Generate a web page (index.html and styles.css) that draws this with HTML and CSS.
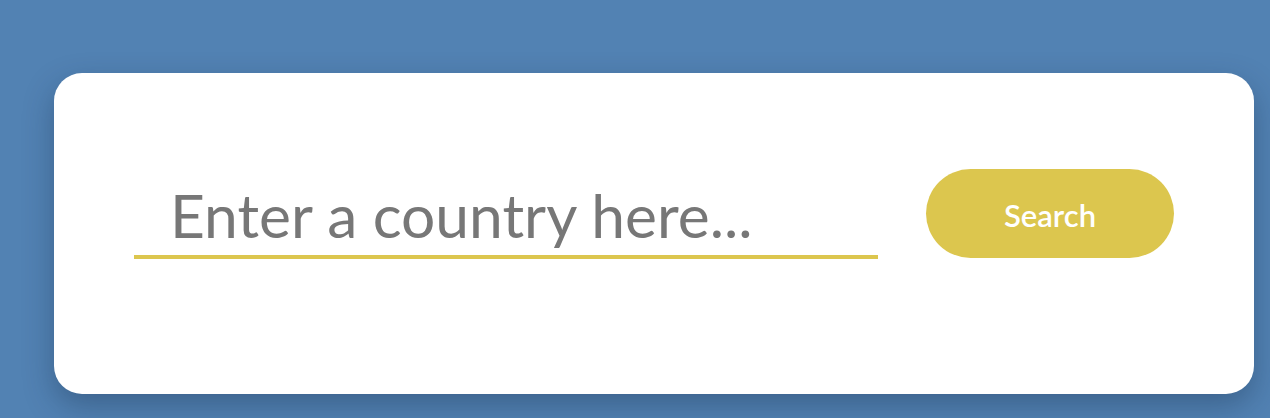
FILE: index.html
```html
<!DOCTYPE html>
<html>
<head>
<meta charset="utf-8">
<link rel="stylesheet" href="styles.css">
</head>
<body>
<div class="page">
  <div class="card">
    <form class="search-row">
      <input class="country-input" type="text" placeholder="Enter a country here...">
      <button class="search-btn" type="button">Search</button>
    </form>
  </div>
</div>
</body>
</html>
```
FILE: styles.css
```css
html, body {
  margin: 0;
  padding: 0;
  width: 1270px;
  height: 418px;
  overflow: hidden;
  background: #5282b3;
  font-family: Lato, "Open Sans", sans-serif;
}
.page {
  padding: 73px 16px 0 54px;
}
.card {
  width: 1200px;
  height: 321px;
  box-sizing: border-box;
  background: #ffffff;
  border-radius: 28px;
  box-shadow: 0 12px 30px rgba(20, 40, 70, 0.35);
  padding: 96px 80px 0 80px;
}
.search-row {
  display: flex;
  align-items: flex-start;
  gap: 48px;
  margin: 0;
}
.country-input {
  flex: 1;
  min-width: 0;
  height: 90px;
  box-sizing: border-box;
  border: none;
  border-bottom: 4px solid #dcc64e;
  outline: none;
  padding: 4px 0 0 36px;
  font-family: Lato, sans-serif;
  font-size: 60.5px;
  color: #777777;
  background: transparent;
}
.country-input::placeholder {
  color: #777777;
  opacity: 1;
}
.search-btn {
  flex: 0 0 248px;
  width: 248px;
  height: 89px;
  border: none;
  border-radius: 45px;
  background: #dcc64e;
  color: #ffffff;
  font-family: Lato, sans-serif;
  font-weight: 600;
  font-size: 31px;
  padding: 3px 0 0 0;
  cursor: pointer;
}
```
